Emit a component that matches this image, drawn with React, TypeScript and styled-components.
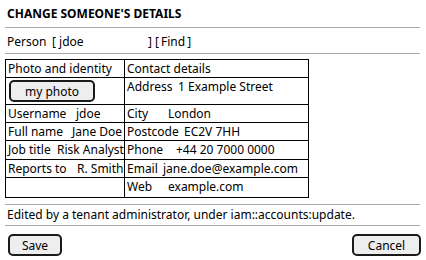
import React from 'react';
import styled, { createGlobalStyle } from 'styled-components';

const Global = createGlobalStyle`
    body {
        margin: 0;
        background: #ffffff;
        font-family: 'Noto Sans', 'Open Sans', sans-serif;
        font-size: 12px;
        color: #000000;
    }
`

const Page = styled.div`
    width: 415px;
    padding: 6px 0 0 5px;
`

const Title = styled.div`
    font-weight: 700;
    font-size: 12px;
    line-height: 16px;
    padding-left: 2px;
    margin-bottom: 5px;
`

const Rule = styled.div`
    height: 0;
    border-top: 1px solid #a8a8a8;
`

const PersonRow = styled.div`
    display: flex;
    align-items: center;
    height: 25px;
    padding: 1px 0 0 2px;
    box-sizing: border-box;
    white-space: pre;
`

const Field = styled.span<{ w: number }>`
    display: inline-block;
    width: ${p => p.w}px;
`

const Table = styled.div`
    margin: 5px 0 6px 0;
    width: 302px;
    display: grid;
    grid-template-columns: 119px 183px;
    border: 1px solid #000;
`

const Cell = styled.div<{ h: number; right?: boolean; last?: boolean }>`
    height: ${p => p.h}px;
    box-sizing: border-box;
    border-right: ${p => (p.right ? 'none' : '1px solid #000')};
    border-bottom: ${p => (p.last ? 'none' : '1px solid #000')};
    padding: 0 0 0 2px;
    line-height: 17px;
    white-space: nowrap;
`

const Pair = styled.div<{ at: number }>`
    display: grid;
    grid-template-columns: ${p => p.at}px auto;
`

const Button = styled.div<{ w: number }>`
    width: ${p => p.w}px;
    height: 22px;
    box-sizing: border-box;
    border: 2px solid #1a1a1a;
    border-radius: 5px;
    background: #eeeeee;
    display: flex;
    align-items: center;
    justify-content: center;
    font-size: 12px;
`

const PhotoCell = styled.div`
    height: 27px;
    box-sizing: border-box;
    border-right: 1px solid #000;
    border-bottom: 1px solid #000;
    padding: 2px 0 0 3px;
`

const Note = styled.div`
    padding-left: 2px;
    height: 20px;
    line-height: 20px;
`

const Footer = styled.div`
    display: flex;
    justify-content: space-between;
    padding: 8px 0 0 3px;
    margin-right: -1px;
`

const rows: { left: [string, string, number] | null; right: [string, string, number]; h: number }[] = [
    { left: ['Username', 'jdoe', 68], right: ['City', 'London', 41], h: 18 },
    { left: ['Full name', 'Jane Doe', 64], right: ['Postcode', 'EC2V 7HH', 57], h: 18 },
    { left: ['Job title', 'Risk Analyst', 49], right: ['Phone', '+44 20 7000 0000', 49], h: 19 },
    { left: ['Reports to', 'R. Smith', 69], right: ['Email', 'jane.doe@example.com', 36], h: 18 },
    { left: null, right: ['Web', 'example.com', 41], h: 19 },
]

export default function App() {
    return (
        <Page>
            <Global />
            <Title>CHANGE SOMEONE'S DETAILS</Title>
            <Rule />
            <PersonRow>
                <Field w={45}>Person</Field>
                <Field w={96}>[ jdoe</Field>
                <span>] [{'\u2009'}Find{'\u2009'}]</span>
            </PersonRow>
            <Rule />
            <Table>
                <Cell h={18}>Photo and identity</Cell>
                <Cell h={18} right>Contact details</Cell>
                <PhotoCell>
                    <Button w={86}>my photo</Button>
                </PhotoCell>
                <Cell h={27} right>
                    <Pair at={51}><span>Address</span><span>1 Example Street</span></Pair>
                </Cell>
                {rows.map((r, i) => {
                    const last = i === rows.length - 1
                    return (
                        <React.Fragment key={i}>
                            <Cell h={r.h} last={last}>
                                {r.left && <Pair at={r.left[2]}><span>{r.left[0]}</span><span>{r.left[1]}</span></Pair>}
                            </Cell>
                            <Cell h={r.h} right last={last}>
                                <Pair at={r.right[2]}><span>{r.right[0]}</span><span>{r.right[1]}</span></Pair>
                            </Cell>
                        </React.Fragment>
                    )
                })}
            </Table>
            <Rule />
            <Note>Edited by a tenant administrator, under iam::accounts:update.</Note>
            <Rule />
            <Footer>
                <Button w={54}>Save</Button>
                <Button w={69}>Cancel</Button>
            </Footer>
        </Page>
    )
}
